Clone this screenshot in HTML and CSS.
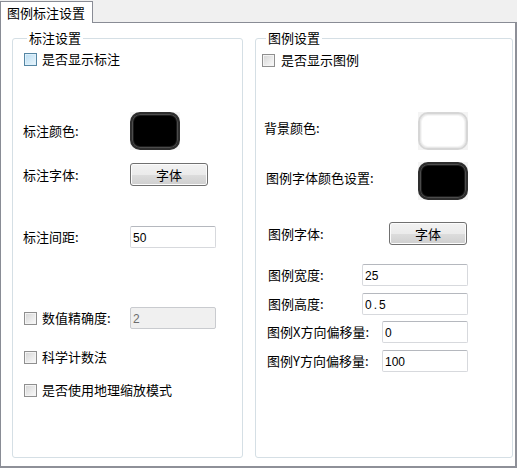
FILE: index.html
```html
<!DOCTYPE html>
<html lang="zh-CN">
<head>
<meta charset="utf-8">
<title>图例标注设置</title>
<link rel="stylesheet" href="styles.css">
</head>
<body>
<div class="window">
  <div class="tabstrip">
    <div class="tab">图例标注设置</div>
  </div>
  <div class="panel">
    <fieldset class="group group-left">
      <legend>标注设置</legend>
      <div class="row r-show">
        <label class="check"><input type="checkbox" class="chk chk-hot"><span>是否显示标注</span></label>
      </div>
      <div class="row r-color">
        <span class="lbl lw-left">标注颜色:</span>
        <span class="swatch"><span class="swatch-in black"></span></span>
      </div>
      <div class="row r-font">
        <span class="lbl lw-left">标注字体:</span>
        <button class="btn">字体</button>
      </div>
      <div class="row r-gap">
        <span class="lbl lw-left">标注间距:</span>
        <input class="txt w86" type="text" value="50">
      </div>
      <div class="row r-prec">
        <label class="check lw-left"><input type="checkbox" class="chk"><span>数值精确度:</span></label>
        <input class="txt w86" type="text" value="2" disabled>
      </div>
      <div class="row r-sci">
        <label class="check"><input type="checkbox" class="chk"><span>科学计数法</span></label>
      </div>
      <div class="row r-geo">
        <label class="check"><input type="checkbox" class="chk"><span>是否使用地理缩放模式</span></label>
      </div>
    </fieldset>
    <fieldset class="group group-right">
      <legend>图例设置</legend>
      <div class="row rr-show">
        <label class="check"><input type="checkbox" class="chk"><span>是否显示图例</span></label>
      </div>
      <div class="row rr-bg">
        <span class="lbl lbl-up lw-bg">背景颜色:</span>
        <span class="swatch"><span class="swatch-in white"></span></span>
      </div>
      <div class="row rr-fc">
        <span class="lbl lbl-up lw-fc">图例字体颜色设置:</span>
        <span class="swatch"><span class="swatch-in black"></span></span>
      </div>
      <div class="row rr-font">
        <span class="lbl lw-font">图例字体:</span>
        <button class="btn">字体</button>
      </div>
      <div class="row rr-w">
        <span class="lbl lw-wh">图例宽度:</span>
        <input class="txt w106" type="text" value="25">
      </div>
      <div class="row rr-h">
        <span class="lbl lw-wh">图例高度:</span>
        <input class="txt w106 spaced" type="text" value="0.5">
      </div>
      <div class="row rr-x">
        <span class="lbl lw-xy">图例X方向偏移量:</span>
        <input class="txt w86" type="text" value="0">
      </div>
      <div class="row rr-y">
        <span class="lbl lw-xy">图例Y方向偏移量:</span>
        <input class="txt w86" type="text" value="100">
      </div>
    </fieldset>
  </div>
</div>
</body>
</html>
```

FILE: styles.css
```css
* { box-sizing: border-box; }

html, body {
  margin: 0;
  padding: 0;
  background: #ffffff;
}

body {
  font-family: "Noto Sans CJK SC", "Noto Sans", sans-serif;
  font-size: 13px;
  line-height: 16px;
  color: #000;
}

.window {
  width: 517px;
  height: 468px;
  display: flex;
  flex-direction: column;
}

.tabstrip {
  height: 22px;
  flex: 0 0 22px;
  padding-top: 1px;
  background: #f0f0f0;
  display: flex;
}

.tab {
  position: relative;
  z-index: 1;
  width: 93px;
  height: 22px;
  padding: 3px 0 0 6px;
  background: #ffffff;
  border: 1px solid #898c95;
  border-bottom: none;
  white-space: nowrap;
}

.panel {
  flex: 1 1 auto;
  display: flex;
  gap: 12px;
  padding: 7px 2px 8px 11px;
  background: #ffffff;
  border-top: 1px solid #898c95;
  border-left: 1px solid #898c95;
  border-right: 2px solid #8e9098;
  border-bottom: 2px solid #8e9098;
}

.group {
  margin: 0;
  min-width: 0;
  border: 1px solid #d5dfe5;
  border-radius: 3px;
  padding: 0;
}

.group legend {
  margin-left: 4px;
  padding: 0 2px;
  line-height: 16px;
}

.group-left {
  width: 231px;
  padding-left: 10px;
}

.group-right {
  width: 258px;
  padding-left: 6px;
}

.row {
  display: flex;
  align-items: center;
}

.check {
  display: flex;
  align-items: center;
  gap: 5px;
  height: 16px;
  white-space: nowrap;
}

.chk {
  appearance: none;
  -webkit-appearance: none;
  margin: 0 0 0 1px;
  width: 13px;
  height: 13px;
  border: 1px solid #8f8f8f;
  background: linear-gradient(135deg, #d4d4d4 0%, #ececec 60%, #fafafa 100%);
  box-shadow: inset 0 0 0 1px #f4f4f4;
}

.chk-hot {
  border-color: #5586a3;
  background: linear-gradient(135deg, #b9dcf2 0%, #d7ecf8 60%, #eaf5fc 100%);
  box-shadow: inset 0 0 0 1px #def0fb;
}

.group-right .chk { margin-left: 0; }
.group-right .check { gap: 6px; }

.lbl { white-space: nowrap; }
.lbl-up { margin-bottom: 6px; }

.lw-left { width: 107px; flex: 0 0 107px; }
.lw-bg { margin-left: 2px; width: 154px; flex: 0 0 154px; }
.lw-fc { margin-left: 4px; width: 152px; flex: 0 0 152px; }
.lw-font { margin-left: 6px; width: 121px; flex: 0 0 121px; }
.lw-wh { margin-left: 6px; width: 94px; flex: 0 0 94px; }
.lw-xy { margin-left: 5px; width: 115px; flex: 0 0 115px; }

.swatch {
  width: 50px;
  height: 38px;
  background: #f4f4f4;
  display: flex;
}

.swatch-in {
  flex: 1;
  border-radius: 10px;
}

.swatch-in.black {
  background: #000;
  border: 2px solid #2e2e2e;
  box-shadow: inset 0 0 0 1px #4b4b4b, inset 0 0 0 2px #1a1a1a;
}

.swatch-in.white {
  background: #fff;
  border: 2px solid #d6d6d6;
  box-shadow: inset 0 0 0 1px #e8e8e8, inset 0 0 0 2px #f6f6f6;
}

.btn {
  width: 78px;
  height: 23px;
  padding: 0;
  font: inherit;
  color: #000;
  border: 1px solid #707070;
  border-radius: 3px;
  background: linear-gradient(#f2f2f2 0%, #ebebeb 50%, #dddddd 51%, #cfcfcf 100%);
  box-shadow: inset 0 0 0 1px #fcfcfc;
}

.txt {
  height: 22px;
  padding: 1px 2px 0;
  font-family: "Liberation Sans", Arial, sans-serif;
  font-size: 12px;
  color: #000;
  border: 1px solid #d7d9dd;
  border-top-color: #b5b8be;
  border-radius: 2px;
  background: #fff;
  outline: none;
}

.txt:disabled {
  background: #f0f0f0;
  color: #6d6d6d;
  border-color: #c9cbcf;
}

.spaced { letter-spacing: 2px; }

.w86 { width: 86px; }
.w106 { width: 106px; }

/* left column rows */
.r-show { margin-top: 5px; }
.r-color { margin-top: 45px; }
.r-font { margin-top: 13px; }
.r-gap { margin-top: 40px; }
.r-prec { margin-top: 59px; }
.r-sci { margin-top: 20px; }
.r-geo { margin-top: 17px; }

/* right column rows */
.rr-show { margin-top: 6px; }
.rr-bg { margin-top: 44px; }
.rr-fc { margin-top: 12px; }
.rr-font { margin-top: 22px; }
.rr-w { margin-top: 19px; }
.rr-h { margin-top: 7px; }
.rr-x { margin-top: 6px; }
.rr-y { margin-top: 7px; }

.rr-font .btn { margin-left: 0; }
```
